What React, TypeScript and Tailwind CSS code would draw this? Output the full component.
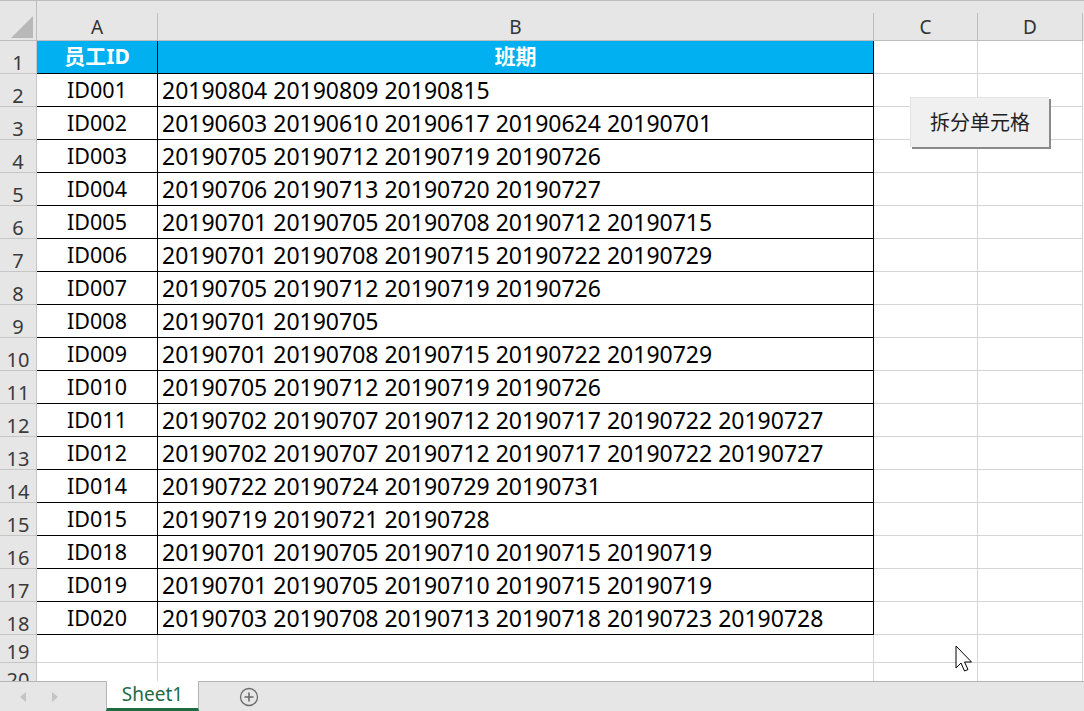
const rows: [string, string][] = [
  ['ID001', '20190804 20190809 20190815'],
  ['ID002', '20190603 20190610 20190617 20190624 20190701'],
  ['ID003', '20190705 20190712 20190719 20190726'],
  ['ID004', '20190706 20190713 20190720 20190727'],
  ['ID005', '20190701 20190705 20190708 20190712 20190715'],
  ['ID006', '20190701 20190708 20190715 20190722 20190729'],
  ['ID007', '20190705 20190712 20190719 20190726'],
  ['ID008', '20190701 20190705'],
  ['ID009', '20190701 20190708 20190715 20190722 20190729'],
  ['ID010', '20190705 20190712 20190719 20190726'],
  ['ID011', '20190702 20190707 20190712 20190717 20190722 20190727'],
  ['ID012', '20190702 20190707 20190712 20190717 20190722 20190727'],
  ['ID014', '20190722 20190724 20190729 20190731'],
  ['ID015', '20190719 20190721 20190728'],
  ['ID018', '20190701 20190705 20190710 20190715 20190719'],
  ['ID019', '20190701 20190705 20190710 20190715 20190719'],
  ['ID020', '20190703 20190708 20190713 20190718 20190723 20190728'],
];

const font = { fontFamily: '"Noto Sans", "Noto Sans CJK SC", sans-serif' };

const RowNum = ({ n, h }: { n: number; h: string }) => (
  <div className={`${h} w-[37px] shrink-0 flex items-end justify-center bg-[#e6e6e6] border-r border-b border-[#c6c6c6] text-[20px] text-[#3a3a3a] leading-none`}>
    <span>{n}</span>
  </div>
);

const Blank = ({ w }: { w: string }) => (
  <div className={`${w} shrink-0 border-r border-b border-[#d4d4d4]`} />
);

export default function App() {
  return (
    <div className="relative w-[1084px] h-[711px] overflow-hidden bg-white flex flex-col" style={font}>
      {/* column header */}
      <div className="h-[41px] shrink-0 flex bg-[#e6e6e6] border-t border-[#bdbdbd]">
        <div className="w-[37px] shrink-0 pt-[12px] border-r border-b border-[#bdbdbd]">
          <div className="w-[35px] h-[27px] flex items-end justify-end pr-[2px] pb-[2px]">
            <svg width="22" height="22" viewBox="0 0 22 22">
              <polygon points="22,0 22,22 0,22" fill="#b8b8b8" />
            </svg>
          </div>
        </div>
        {[
          ['A', 'w-[121px]'],
          ['B', 'w-[716px]'],
          ['C', 'w-[104px]'],
          ['D', 'w-[105px]'],
        ].map(([l, w]) => (
          <div key={l} className={`${w} shrink-0 flex flex-col`}>
            <div className="h-[12px]" />
            <div className="flex-1 flex items-center justify-center pt-[2px] border-r border-b border-[#bdbdbd] text-[19px] text-[#333] leading-none">
              {l}
            </div>
          </div>
        ))}
      </div>

      {/* row 1 header */}
      <div className="flex h-[33px] shrink-0">
        <RowNum n={1} h="h-[33px]" />
        <div className="w-[121px] shrink-0 bg-[#00b0f0] border-r border-b border-black flex items-center justify-center text-white font-bold text-[21px]">
          员工ID
        </div>
        <div className="w-[716px] shrink-0 bg-[#00b0f0] border-r border-b border-black flex items-center justify-center text-white font-bold text-[21px]">
          班期
        </div>
        <Blank w="w-[104px]" />
        <Blank w="w-[105px]" />
      </div>

      {rows.map(([id, dates], i) => (
        <div key={id} className="flex h-[33px] shrink-0">
          <RowNum n={i + 2} h="h-[33px]" />
          <div className="w-[121px] shrink-0 border-r border-b border-black flex items-center justify-center text-[21.5px] text-black">
            {id}
          </div>
          <div className="w-[716px] shrink-0 border-r border-b border-black flex items-center pl-[4px] text-[23px] text-black whitespace-nowrap">
            {dates}
          </div>
          <Blank w="w-[104px]" />
          <Blank w="w-[105px]" />
        </div>
      ))}

      {[19, 20].map((n) => (
        <div key={n} className="flex h-[28px] shrink-0">
          <RowNum n={n} h="h-[28px]" />
          <Blank w="w-[121px]" />
          <Blank w="w-[716px]" />
          <Blank w="w-[104px]" />
          <Blank w="w-[105px]" />
        </div>
      ))}

      {/* sheet tabs */}
      <div className="absolute left-0 bottom-0 w-full h-[30px] bg-[#e6e6e6] border-t border-[#b5b5b5] flex items-stretch">
        <div className="w-[106px] flex items-center pl-[20px] gap-[26px]">
          <svg width="6" height="10" viewBox="0 0 6 10"><polygon points="6,0 6,10 0,5" fill="#c4c4c4" /></svg>
          <svg width="6" height="10" viewBox="0 0 6 10"><polygon points="0,0 0,10 6,5" fill="#c4c4c4" /></svg>
        </div>
        <div className="w-[93px] -mt-[1px] bg-white border-x border-[#b5b5b5] border-b-[3px] border-b-[#1e6b44] flex items-center justify-center text-[19px] text-[#1e6b44]">
          Sheet1
        </div>
        <div className="w-[100px] flex items-center justify-center">
          <svg width="20" height="20" viewBox="0 0 20 20">
            <circle cx="10" cy="10" r="8.5" fill="none" stroke="#6b6b6b" strokeWidth="1.3" />
            <path d="M10 5.5v9M5.5 10h9" stroke="#6b6b6b" strokeWidth="1.6" />
          </svg>
        </div>
      </div>

      {/* form button */}
      <button className="absolute left-[910px] top-[97px] w-[139px] h-[50px] bg-[#f0f0f0] border-l border-t border-[#e3e3e3] shadow-[2px_2px_0_#8a8a8a] flex items-center justify-center text-[20px] text-[#222]">
        拆分单元格
      </button>

      {/* mouse cursor */}
      <svg className="absolute left-[955px] top-[645px]" width="20" height="28" viewBox="0 0 20 28">
        <path d="M1 1 L1 23 L6 18 L9.5 26 L13 24.5 L9.5 17 L16.5 17 Z" fill="#fff" stroke="#000" strokeWidth="1" strokeLinejoin="round" />
      </svg>
    </div>
  );
}
